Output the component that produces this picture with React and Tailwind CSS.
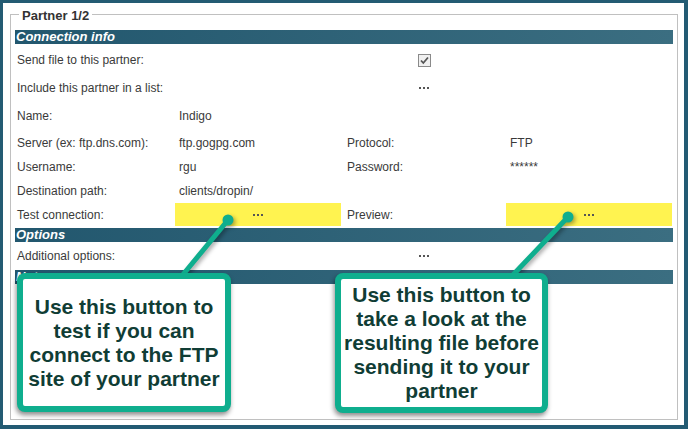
function Dots() {
  return (
    <span className="inline-flex items-center gap-[2px]">
      <span className="w-[2px] h-[2px] bg-[#555]" />
      <span className="w-[2px] h-[2px] bg-[#555]" />
      <span className="w-[2px] h-[2px] bg-[#555]" />
    </span>
  );
}

function Checkbox() {
  return (
    <svg width="13" height="13" viewBox="0 0 13 13">
      <rect x="0.5" y="0.5" width="12" height="12" fill="#f0f0f0" stroke="#8a8a8a" />
      <path d="M3 6.5 L5.3 9 L10 3.5" fill="none" stroke="#555" strokeWidth="1.8" />
    </svg>
  );
}

function Header({ children }) {
  return (
    <div className="h-[14px] pl-[1px] bg-linear-to-r from-[#22576e] to-[#3b6e81] text-white text-[13px] leading-[14px] font-bold italic">
      {children}
    </div>
  );
}

function Row({ h, children }) {
  return (
    <div className={`grid grid-cols-[160px_168px_163px_167px] items-center ${h}`}>{children}</div>
  );
}

function Label({ children }) {
  return <div className="pl-[2px]">{children}</div>;
}

function Callout({ className, lines }) {
  return (
    <div
      className={`absolute flex flex-col items-center justify-center rounded-[8px] border-[6px] border-[#0fae8e] bg-white shadow-[-1px_3px_5px_rgba(0,0,0,0.45)] text-[#103d35] text-[21px] leading-[24px] font-bold ${className}`}
    >
      {lines.map((l) => (
        <div key={l} className="whitespace-nowrap">{l}</div>
      ))}
    </div>
  );
}

export default function App() {
  return (
    <div className="w-[688px] h-[429px] bg-[#235b73] pt-[3px] pl-[3px] pr-[4px] pb-[4px] font-['Liberation_Sans',Arial,sans-serif]">
      <div className="relative h-full bg-white pt-[3px] pl-[7px] pr-[6px] pb-[5px]">
        <fieldset className="h-full border border-[#c0c0c0] pl-[4px] pr-[4px] pt-[8px] text-[12px] text-[#3a3a3a]">
          <legend className="ml-[4px] px-[3px] h-[16px] leading-[16px] text-[13px] font-bold text-[#333]">
            <span className="relative top-[2px]">Partner 1/2</span>
          </legend>

          <Header>Connection info</Header>
          <Row h="h-[28px] mt-[2px]">
            <Label>Send file to this partner:</Label>
            <div className="col-span-3 flex justify-center"><Checkbox /></div>
          </Row>
          <Row h="h-[28px]">
            <Label>Include this partner in a list:</Label>
            <div className="col-span-3 flex justify-center"><Dots /></div>
          </Row>
          <Row h="h-[28px]">
            <Label>Name:</Label>
            <div className="pl-[4px]">Indigo</div>
          </Row>
          <Row h="h-[26px]">
            <Label>Server (ex: ftp.dns.com):</Label>
            <div className="pl-[4px]">ftp.gogpg.com</div>
            <div className="pl-[4px]">Protocol:</div>
            <div className="pl-[4px]">FTP</div>
          </Row>
          <Row h="h-[22px]">
            <Label>Username:</Label>
            <div className="pl-[4px]">rgu</div>
            <div className="pl-[4px]">Password:</div>
            <div className="pl-[4px]">******</div>
          </Row>
          <Row h="h-[25px]">
            <Label>Destination path:</Label>
            <div className="pl-[4px]">clients/dropin/</div>
          </Row>
          <Row h="h-[23px]">
            <Label>Test connection:</Label>
            <div className="h-full mr-[2px] bg-[#fff350] flex items-center justify-center"><Dots /></div>
            <div className="pl-[4px]">Preview:</div>
            <div className="h-full mr-[1px] bg-[#fff350] flex items-center justify-center"><Dots /></div>
          </Row>

          <div className="mt-[2px]"><Header>Options</Header></div>
          <Row h="h-[28px]">
            <Label>Additional options:</Label>
            <div className="col-span-3 flex justify-center"><Dots /></div>
          </Row>
          <Header>Notes</Header>
        </fieldset>

        <svg className="absolute inset-0 w-full h-full pointer-events-none drop-shadow-[2px_2px_2px_rgba(0,0,0,0.35)]" viewBox="0 0 681 422">
          <line x1="225" y1="217" x2="178" y2="274" stroke="#0fae8e" strokeWidth="5" strokeLinecap="round" />
          <circle cx="225" cy="217" r="5.5" fill="#0fae8e" />
          <line x1="565" y1="214" x2="508" y2="274" stroke="#0fae8e" strokeWidth="5" strokeLinecap="round" />
          <circle cx="565" cy="214" r="5.5" fill="#0fae8e" />
        </svg>

        <Callout
          className="left-[14px] top-[270px] w-[214px] h-[139px]"
          lines={["Use this button to", "test if you can", "connect to the FTP", "site of your partner"]}
        />
        <Callout
          className="left-[332px] top-[270px] w-[213px] h-[140px]"
          lines={["Use this button to", "take a look at the", "resulting file before", "sending it to your", "partner"]}
        />
      </div>
    </div>
  );
}
